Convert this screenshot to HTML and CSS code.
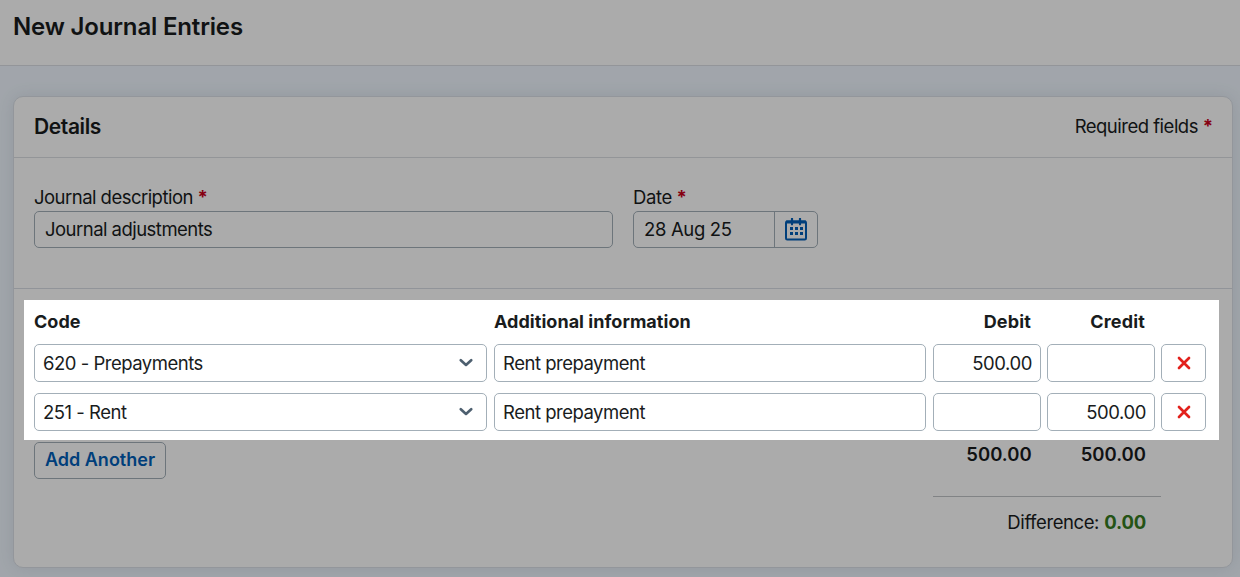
FILE: index.html
```html
<!DOCTYPE html>
<html lang="en">
<head>
<meta charset="utf-8">
<title>New Journal Entries</title>
<link rel="stylesheet" href="styles.css">
</head>
<body>
<header class="page-header"><h1 class="page-title">New Journal Entries</h1></header>
<main class="page">
  <section class="card">
    <div class="card-header">
      <h2 class="card-title">Details</h2>
      <span class="required-note">Required fields <b class="star">*</b></span>
    </div>
    <div class="details">
      <div class="field field-description">
        <label class="label">Journal description <b class="star">*</b></label>
        <div class="input input-top">Journal adjustments</div>
      </div>
      <div class="field field-date">
        <label class="label label-date">Date <b class="star">*</b></label>
        <div class="date-group">
          <div class="date-value">28 Aug 25</div>
          <div class="date-button">
            <svg width="22" height="23" viewBox="0 0 22 23" fill="none" stroke="#005eb8" stroke-width="2">
              <rect x="1" y="3.500" width="20" height="18" rx="1.200"/>
              <path d="M1 4h20" stroke-width="3"/>
              <path d="M7 .8v5.500M15 .8v5.500" stroke-width="2.200" stroke-linecap="round"/>
              <path d="M5 10.500h3m2 0h3m2 0h3M5 15.500h3m2 0h3m2 0h3" stroke-width="3"/>
            </svg>
          </div>
        </div>
      </div>
    </div>
    <div class="entries">
      <div class="row head">
        <span>Code</span><span>Additional information</span><span class="num">Debit</span><span class="num">Credit</span><span></span>
      </div>
      <div class="row">
        <div class="input select"><span>620 - Prepayments</span><svg class="chevron" width="14" height="10" viewBox="0 0 14 10"><path d="M1.800 2.200 7 7l5.200-4.800"/></svg></div>
        <div class="input">Rent prepayment</div>
        <div class="input amount">500.00</div>
        <div class="input amount"></div>
        <div class="input remove"><svg class="cross" width="14" height="14" viewBox="0 0 14 14"><path d="M2 2l10 10M12 2 2 12"/></svg></div>
      </div>
      <div class="row">
        <div class="input select"><span>251 - Rent</span><svg class="chevron" width="14" height="10" viewBox="0 0 14 10"><path d="M1.800 2.200 7 7l5.200-4.800"/></svg></div>
        <div class="input">Rent prepayment</div>
        <div class="input amount"></div>
        <div class="input amount">500.00</div>
        <div class="input remove"><svg class="cross" width="14" height="14" viewBox="0 0 14 14"><path d="M2 2l10 10M12 2 2 12"/></svg></div>
      </div>
      <div class="footer">
        <div class="add-button">Add Another</div>
        <div class="summary">
          <div class="totals"><span>500.00</span><span>500.00</span></div>
          <div class="difference"><span class="diff-label">Difference:</span> <b class="diff-value">0.00</b></div>
        </div>
      </div>
    </div>
  </section>
</main>
<div class="spotlight"></div>
</body>
</html>
```
FILE: styles.css
```css
* { box-sizing: border-box; }
body { margin: 0; height: 577px; overflow: hidden; position: relative; background: #f0f7ff; color: #191c1d; font: 18.5px/24px Inter, "Liberation Sans", sans-serif; white-space: nowrap; }
.page-header { height: 66px; background: #fff; border-bottom: 1px solid #dcdfe4; padding: 11px 13px; }
.page-title { margin: 0; font-size: 24px; line-height: 32px; font-weight: 600; letter-spacing: -.17px; }
.page { padding: 30px 7px 0 13px; }
.card { height: 472px; background: #fff; border: 1px solid #dbe0e8; border-radius: 10px; box-shadow: 0 0 16px rgba(70, 80, 95, .12); }
.card-header { height: 61px; border-bottom: 1px solid #dcdfe3; padding: 0 20px; display: flex; align-items: center; justify-content: space-between; }
.card-title { margin: 0; font-size: 21px; font-weight: 600; letter-spacing: -.4px; }
.required-note { padding-bottom: 3px; letter-spacing: -.5px; margin-right: -1px; }
.star { color: #c8001a; font-weight: 700; letter-spacing: 0; }
.details { height: 131px; border-bottom: 1px solid #d9dde4; padding: 27px 20px 0; display: flex; gap: 20px; }
.field { display: flex; flex-direction: column; gap: 2px; }
.field-description { width: 579px; }
.field-date { width: 185px; }
.label { display: block; height: 24px; letter-spacing: -.53px; }
.label-date { letter-spacing: -.4px; }
.input { height: 38px; border: 1px solid #a3afb8; border-radius: 5px; padding: 0 8px; display: flex; align-items: center; letter-spacing: -.49px; }
.input-top { height: 37px; padding: 0 10px 1px; letter-spacing: -.53px; }
.date-group { height: 37px; display: flex; border: 1px solid #a3afb8; border-radius: 5px; }
.date-value { width: 141px; border-right: 1px solid #a3afb8; padding-left: 10px; line-height: 35px; letter-spacing: -.35px; }
.date-button { flex: 1; display: flex; align-items: center; justify-content: center; }
.entries { padding: 21px 20px 0; }
.row { display: grid; grid-template-columns: 460px 439px 114px 114px 45px; margin-bottom: 11px; }
.row .input { margin-right: 6px; }
.row .input:nth-child(-n+2) { margin-right: 7px; }
.row .remove { margin-right: 0; }
.head { font-weight: 700; font-size: 18px; letter-spacing: .04px; margin: 0 0 10px; }
.num { text-align: right; padding-right: 16px; letter-spacing: .15px; }
.select { justify-content: space-between; padding-right: 13px; }
.chevron { fill: none; stroke: #4d5f6f; stroke-width: 2.6; stroke-linecap: round; stroke-linejoin: round; }
.amount { justify-content: flex-end; padding-right: 8px; letter-spacing: -.42px; }
.remove { justify-content: center; padding: 0; }
.cross { fill: none; stroke: #e2211c; stroke-width: 2.7; stroke-linecap: round; }
.footer { display: flex; justify-content: space-between; padding-right: 51px; }
.add-button { width: 132px; height: 37px; border: 1px solid #a3afb8; border-radius: 5px; color: #005eb8; font-size: 18px; font-weight: 600; line-height: 34px; text-align: center; }
.summary { width: 228px; }
.totals { display: flex; justify-content: flex-end; gap: 49px; height: 55px; border-bottom: 1px solid #c0c3c7; padding-right: 15px; font-weight: 600; }
.difference { padding: 13px 15px 0 0; text-align: right; }
.diff-label { letter-spacing: -.4px; }
.diff-value { color: #367c22; font-weight: 700; letter-spacing: -.2px; }
.spotlight { position: absolute; left: 24px; top: 300px; width: 1195px; height: 140px; box-shadow: 0 0 0 1300px rgba(0, 0, 0, .33); pointer-events: none; }
```
